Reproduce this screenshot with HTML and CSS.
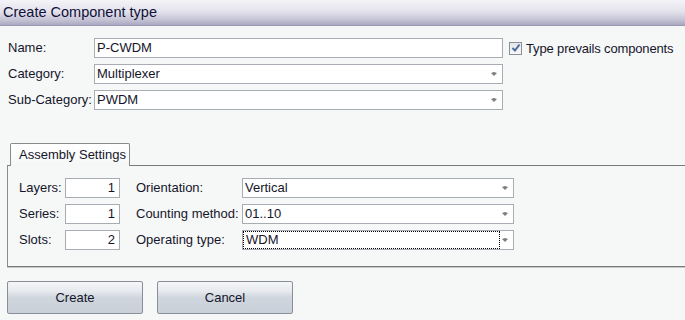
FILE: index.html
```html
<!DOCTYPE html>
<html>
<head>
    <title>Create Component type</title>
    <link rel="stylesheet" href="styles.css">
</head>
<body>
    <div class="titlebar">Create Component type</div>

    <div class="form">
        <span class="label">Name:</span>
        <div class="field">P-CWDM</div>
        <label class="check">
            <span class="box">
                <svg width="10" height="10" viewBox="0 0 10 10"><path d="M1.5 5 L4 7.5 L8.5 1.5" fill="none" stroke="#4d6c9c" stroke-width="2"/></svg>
            </span>
            Type prevails components
        </label>

        <span class="label">Category:</span>
        <div class="field select">Multiplexer<span class="arrow"></span></div>
        <span></span>

        <span class="label">Sub-Category:</span>
        <div class="field select">PWDM<span class="arrow"></span></div>
        <span></span>
    </div>

    <div class="tabs">
        <div class="tab">Assembly Settings</div>
    </div>
    <div class="panel">
        <span class="label">Layers:</span>
        <div class="field num">1</div>
        <span class="label">Orientation:</span>
        <div class="field select">Vertical<span class="arrow"></span></div>

        <span class="label">Series:</span>
        <div class="field num">1</div>
        <span class="label">Counting method:</span>
        <div class="field select">01..10<span class="arrow"></span></div>

        <span class="label">Slots:</span>
        <div class="field num">2</div>
        <span class="label">Operating type:</span>
        <div class="field select"><span class="focus">WDM</span><span class="arrow"></span></div>
    </div>

    <div class="buttons">
        <button class="btn">Create</button>
        <button class="btn">Cancel</button>
    </div>
</body>
</html>
```
FILE: styles.css
```css
body {
    margin: 0;
    width: 685px;
    height: 320px;
    overflow: hidden;
    background-color: #f6f8f8;
    font-family: 'Liberation Sans', Arial, sans-serif;
    font-size: 13px;
    color: #15152a;
}
.titlebar {
    height: 26px;
    box-sizing: border-box;
    padding-left: 3px;
    line-height: 25px;
    font-size: 14.5px;
    color: #10103a;
    background: linear-gradient(#f3f3f8 0%, #e4e3ec 45%, #c4c2d4 80%, #aaa8c0 100%);
    border-bottom: 1px solid #9a98b2;
}
.form {
    display: grid;
    grid-template-columns: 86px 409px auto;
    grid-auto-rows: 20px;
    row-gap: 6px;
    padding: 12px 0 0 8px;
}
.label {
    line-height: 20px;
    white-space: nowrap;
}
.field {
    position: relative;
    height: 20px;
    box-sizing: border-box;
    border: 1px solid #a9adb3;
    background-color: #fff;
    padding-left: 2px;
    line-height: 18px;
    white-space: nowrap;
}
.field.num {
    text-align: right;
    padding: 0 4px 0 0;
}
.arrow {
    position: absolute;
    right: 5px;
    top: 7px;
    width: 0;
    height: 0;
    border-top: 1px solid #7d7d7d;
    border-left: 3px solid transparent;
    border-right: 3px solid transparent;
}
.arrow::after {
    content: '';
    position: absolute;
    left: -3px;
    top: 0;
    border-top: 3px solid #7d7d7d;
    border-left: 3px solid transparent;
    border-right: 3px solid transparent;
}
.focus {
    display: block;
    margin: 1px 14px 1px -1px;
    height: 16px;
    line-height: 16px;
    outline: 1px dotted #000;
    padding-left: 2px;
}
.check {
    display: flex;
    align-items: center;
    gap: 4px;
    margin-left: 6px;
    white-space: nowrap;
    letter-spacing: -0.15px;
}
.box {
    width: 11px;
    height: 11px;
    border: 1px solid #8c8f93;
    background: linear-gradient(#e3e6ea, #f7f8f9);
    display: flex;
    align-items: center;
    justify-content: center;
}
.tabs {
    display: flex;
    margin-top: 33px;
    padding-left: 10px;
}
.tab {
    width: 120px;
    height: 23px;
    box-sizing: border-box;
    border: 1px solid #8a8a8a;
    border-bottom: none;
    border-radius: 2px 2px 0 0;
    background: linear-gradient(#ffffff, #f5f7f7);
    padding-left: 8px;
    line-height: 22px;
    margin-bottom: -1px;
    position: relative;
}
.panel {
    margin-left: 7px;
    width: 700px;
    box-sizing: border-box;
    border: 1px solid #7a7a7a;
    border-left-color: #8c8c8c;
    box-shadow: 0 1px 0 #c8c8c8;
    height: 102px;
    display: grid;
    grid-template-columns: 46px 71px 106px 272px;
    grid-auto-rows: 20px;
    row-gap: 6px;
    padding: 12px 0 0 11px;
}
.panel .field.num {
    width: 55px;
}
.buttons {
    display: flex;
    gap: 14px;
    padding: 14px 0 0 7px;
}
.btn {
    width: 136px;
    height: 33px;
    font-family: 'Liberation Sans', Arial, sans-serif;
    font-size: 13px;
    color: #15152a;
    border: 1px solid #8a8e96;
    border-radius: 2px;
    background: linear-gradient(#f5f6f8 0%, #e6e9ee 30%, #d0d6de 50%, #c9d0d9 100%);
}
```
